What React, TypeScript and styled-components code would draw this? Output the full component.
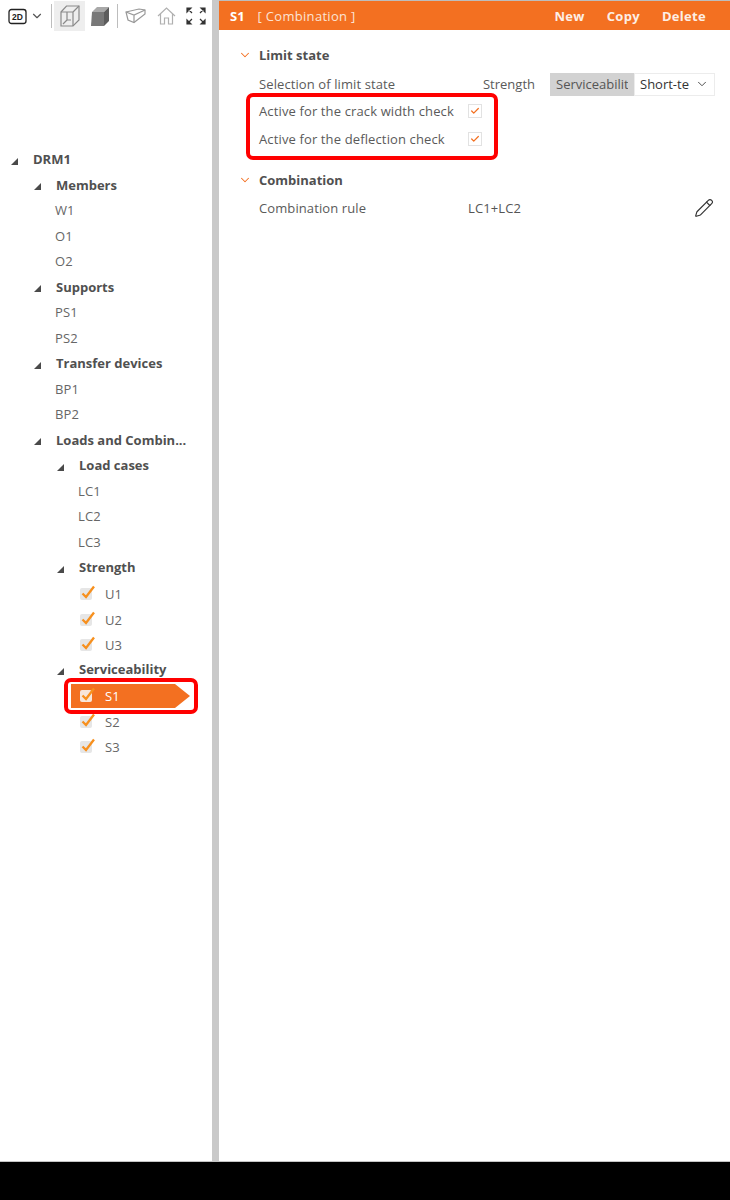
import styled, { createGlobalStyle } from 'styled-components'
import { Check, ChevronDown, Pencil } from 'lucide-react'

const ORANGE = '#f37021'

const Global = createGlobalStyle`
html, body { margin: 0; padding: 0; background: #fff; }
body { font-family: "Open Sans", "Noto Sans", "Liberation Sans", sans-serif; font-size: 13px; color: #555; }
`

type TreeNode = {
    label: string;
    level: number;
    kind: 'root' | 'group' | 'leaf' | 'check';
    selected?: boolean;
}

const nodes: TreeNode[] = [
    { label: 'DRM1', level: 0, kind: 'root' },
    { label: 'Members', level: 1, kind: 'group' },
    { label: 'W1', level: 1, kind: 'leaf' },
    { label: 'O1', level: 1, kind: 'leaf' },
    { label: 'O2', level: 1, kind: 'leaf' },
    { label: 'Supports', level: 1, kind: 'group' },
    { label: 'PS1', level: 1, kind: 'leaf' },
    { label: 'PS2', level: 1, kind: 'leaf' },
    { label: 'Transfer devices', level: 1, kind: 'group' },
    { label: 'BP1', level: 1, kind: 'leaf' },
    { label: 'BP2', level: 1, kind: 'leaf' },
    { label: 'Loads and Combin...', level: 1, kind: 'group' },
    { label: 'Load cases', level: 2, kind: 'group' },
    { label: 'LC1', level: 2, kind: 'leaf' },
    { label: 'LC2', level: 2, kind: 'leaf' },
    { label: 'LC3', level: 2, kind: 'leaf' },
    { label: 'Strength', level: 2, kind: 'group' },
    { label: 'U1', level: 2, kind: 'check' },
    { label: 'U2', level: 2, kind: 'check' },
    { label: 'U3', level: 2, kind: 'check' },
    { label: 'Serviceability', level: 2, kind: 'group' },
    { label: 'S1', level: 2, kind: 'check', selected: true },
    { label: 'S2', level: 2, kind: 'check' },
    { label: 'S3', level: 2, kind: 'check' },
]

const App = () => {
    return (
        <>
            <Global />
            <Page>
                <Main>
                    <Sidebar>
                        <Toolbar>
                            <ToolIcon $width={20}>
                                <svg width="19" height="17" viewBox="0 0 19 17" fill="none">
                                    <rect x="1" y="1.5" width="17" height="14" rx="2.5" stroke="#222" strokeWidth="1.3" />
                                    <text x="9.5" y="11.5" textAnchor="middle" fontSize="8.5" fontWeight="700" fontFamily="Liberation Sans, sans-serif" fill="#222">2D</text>
                                </svg>
                            </ToolIcon>
                            <ToolIcon $width={20}>
                                <ChevronDown size={14} color="#555" strokeWidth={2} />
                            </ToolIcon>
                            <Separator $gap={4} />
                            <ActiveTool>
                                <svg width="20" height="22" viewBox="0 0 20 22" fill="none" stroke="#8a8a8a" strokeWidth="1.2">
                                    <path d="M1 7 L6.5 1 H19 V15 L13 21 H1 Z" />
                                    <path d="M1 7 H13 V21 M13 7 L19 1" />
                                    <path d="M7 7 V15 M7 15 L3 19 M7 15 H11" />
                                </svg>
                            </ActiveTool>
                            <ToolIcon $width={30}>
                                <svg width="20" height="21" viewBox="0 0 20 21">
                                    <path d="M2 6 L7 1 H19 L14 6 Z" fill="#a8a8a8" />
                                    <path d="M14 6 L19 1 V15 L14 20 Z" fill="#5c5c5c" />
                                    <path d="M2 6 H14 V20 H1 Z" fill="#787878" />
                                </svg>
                            </ToolIcon>
                            <Separator $gap={2} />
                            <ToolIcon $width={34}>
                                <svg width="21" height="16" viewBox="0 0 21 16" fill="none" stroke="#999" strokeWidth="1.2">
                                    <path d="M1 4 L14 1 L20 2 V6 L9 14.5 L3 12 Z" />
                                    <path d="M1 4 L9 7 L20 2 M9 7 V14.5" />
                                </svg>
                            </ToolIcon>
                            <ToolIcon $width={28}>
                                <svg width="19" height="18" viewBox="0 0 19 18" fill="none" stroke="#b0b0b0" strokeWidth="1.2">
                                    <path d="M1 9 L9.5 1 L18 9" />
                                    <path d="M3.5 7 V17 H7.5 V11 H11.5 V17 H15.5 V7" />
                                </svg>
                            </ToolIcon>
                            <ToolIcon $width={32}>
                                <svg width="20" height="18" viewBox="0 0 20 18" fill="#333" stroke="#333" strokeWidth="1.2">
                                    <path d="M1 1 H5 L1 5 Z M2 2 L6 6" />
                                    <path d="M19 1 H15 L19 5 Z M18 2 L14 6" />
                                    <path d="M1 17 H5 L1 13 Z M2 16 L6 12" />
                                    <path d="M19 17 H15 L19 13 Z M18 16 L14 12" />
                                </svg>
                            </ToolIcon>
                        </Toolbar>
                        <Tree>
                            {nodes.map((node) => (
                                <Row key={node.label} $level={node.level} $kind={node.kind}>
                                    {node.kind === 'check' ? (
                                        <CheckRow $selected={node.selected}>
                                            <TreeCheck $selected={node.selected}>
                                                <svg width="15" height="15" viewBox="0 0 15 15" fill="none">
                                                    <path d="M1.5 8.5 L5 12 L13 1.5" stroke="#f7901e" strokeWidth="2.3" />
                                                </svg>
                                            </TreeCheck>
                                            <span>{node.label}</span>
                                            {node.selected && <Highlight $inset="-6px -23px -6px -7px" />}
                                        </CheckRow>
                                    ) : (
                                        <>
                                            {node.kind !== 'leaf' && <Expander />}
                                            <span>{node.label}</span>
                                        </>
                                    )}
                                </Row>
                            ))}
                        </Tree>
                    </Sidebar>
                    <Divider />
                    <Content>
                        <Header>
                            <strong>S1</strong>
                            <HeaderTitle>[ Combination ]</HeaderTitle>
                            <HeaderActions>
                                <HeaderAction>New</HeaderAction>
                                <HeaderAction>Copy</HeaderAction>
                                <HeaderAction>Delete</HeaderAction>
                            </HeaderActions>
                        </Header>
                        <Body>
                            <SectionTitle>
                                <ChevronDown size={14} color={ORANGE} strokeWidth={1.8} />
                                Limit state
                            </SectionTitle>
                            <SelectRow>
                                <Label>Selection of limit state</Label>
                                <Toggle>Strength</Toggle>
                                <ToggleActive><span>Serviceability</span></ToggleActive>
                                <Select>
                                    <span>Short-te</span>
                                    <ChevronDown size={14} color="#444" strokeWidth={1.6} />
                                </Select>
                            </SelectRow>
                            <ChecksGroup>
                                <CheckLine>
                                    <CheckLabel>Active for the crack width check</CheckLabel>
                                    <FormCheck><Check size={10} color={ORANGE} strokeWidth={3} /></FormCheck>
                                </CheckLine>
                                <CheckLine>
                                    <CheckLabel>Active for the deflection check</CheckLabel>
                                    <FormCheck><Check size={10} color={ORANGE} strokeWidth={3} /></FormCheck>
                                </CheckLine>
                                <Highlight $inset="0" />
                            </ChecksGroup>
                            <SectionTitle $gap={10}>
                                <ChevronDown size={14} color={ORANGE} strokeWidth={1.8} />
                                Combination
                            </SectionTitle>
                            <RuleRow>
                                <Label>Combination rule</Label>
                                <RuleValue>LC1+LC2</RuleValue>
                                <Pencil size={20} color="#333" strokeWidth={1.4} />
                            </RuleRow>
                        </Body>
                    </Content>
                </Main>
                <Footer />
            </Page>
        </>
    )
}

export default App;

const Page = styled.div`
height: 1200px;
width: 730px;
display: flex;
flex-direction: column;
overflow: hidden;
`

const Main = styled.div`
flex: 1;
display: flex;
min-height: 0;
border-bottom: 1px solid #c4c4c4;
`

const Footer = styled.div`
height: 38px;
background: #000;
`

const Sidebar = styled.div`
width: 212px;
flex-shrink: 0;
`

const Divider = styled.div`
width: 7px;
flex-shrink: 0;
background: #c9c9c9;
`

const Toolbar = styled.div`
height: 30px;
padding: 1px 0 0 7px;
display: flex;
align-items: center;
`

const ToolIcon = styled.div<{ $width: number }>`
width: ${(p) => p.$width}px;
height: 30px;
display: flex;
align-items: center;
justify-content: center;
flex-shrink: 0;
`

const ActiveTool = styled.div`
width: 31px;
height: 30px;
margin-left: 2px;
background: #eeeeee;
display: flex;
align-items: center;
justify-content: center;
`

const Separator = styled.div<{ $gap: number }>`
width: 1px;
height: 24px;
margin-left: ${(p) => p.$gap}px;
background: #bdbdbd;
`

const Tree = styled.div`
margin-top: 115.5px;
`

const Row = styled.div<{ $level: number; $kind: TreeNode['kind'] }>`
height: 25.5px;
display: flex;
align-items: center;
position: relative;
font-size: 13px;
font-weight: ${(p) => (p.$kind === 'root' || p.$kind === 'group' ? 700 : 400)};
color: ${(p) => (p.$kind === 'root' || p.$kind === 'group' ? '#505050' : '#666')};
letter-spacing: ${(p) => (p.$kind === 'root' || p.$kind === 'group' ? '0' : '0.1px')};
padding-left: ${(p) => {
    if (p.$kind === 'check') return 0
    const base = 11 + p.$level * 23
    return p.$kind === 'leaf' ? base + 21 : base
}}px;
`

const Expander = styled.i`
width: 0;
height: 0;
margin-right: 15px;
border-style: solid;
border-width: 0 0 7px 7px;
border-color: transparent transparent #4a4a4a transparent;
flex-shrink: 0;
margin-top: 4px;
`

const CheckRow = styled.div<{ $selected?: boolean }>`
position: relative;
height: 24px;
margin: 3px 0 0 71px;
padding-left: 9px;
display: flex;
align-items: center;
box-sizing: border-box;
background: ${(p) => (p.$selected ? ORANGE : 'transparent')};
color: ${(p) => (p.$selected ? '#fff' : '#666')};

${(p) => p.$selected && `
    width: 104px;
    &::after {
        content: "";
        position: absolute;
        left: 100%;
        top: 0;
        border-style: solid;
        border-width: 12px 0 12px 15px;
        border-color: transparent transparent transparent ${ORANGE};
    }
`}
`

const TreeCheck = styled.div<{ $selected?: boolean }>`
width: 12px;
height: 12px;
margin-right: 13px;
background: ${(p) => (p.$selected ? '#f8e6da' : '#e6e6e6')};
border-radius: 2px;
position: relative;
flex-shrink: 0;

svg {
    position: absolute;
    left: 1px;
    top: -3px;
}
`

const Highlight = styled.div<{ $inset: string }>`
position: absolute;
inset: ${(p) => p.$inset};
border: 4px solid #ff0000;
border-radius: 7px;
box-sizing: border-box;
pointer-events: none;
z-index: 2;
`

const Content = styled.div`
flex: 1;
min-width: 0;
border-top: 1px solid #bdbdbd;
`

const Header = styled.div`
height: 29px;
background: ${ORANGE};
color: #fff;
padding: 0 11px;
display: flex;
align-items: center;
font-size: 13px;

strong {
    font-weight: 700;
}
`

const HeaderTitle = styled.span`
margin-left: 13px;
letter-spacing: 0.3px;
color: #fbe3d5;
`

const HeaderActions = styled.div`
margin-left: auto;
padding-right: 13px;
display: flex;
gap: 22px;
`

const HeaderAction = styled.span`
font-weight: 700;
letter-spacing: 0.3px;
color: #fdeee5;
`

const Body = styled.div`
padding: 15px 15px 0 40px;
`

const SectionTitle = styled.div<{ $gap?: number }>`
position: relative;
height: 20px;
margin-top: ${(p) => p.$gap ?? 0}px;
display: flex;
align-items: center;
font-weight: 700;
color: #505050;

svg {
    position: absolute;
    left: -21px;
}
`

const SelectRow = styled.div`
height: 24px;
margin-top: 7px;
display: flex;
align-items: center;
`

const Label = styled.span`
color: #5a5a5a;
letter-spacing: 0.1px;
`

const Toggle = styled.span`
margin-left: auto;
margin-right: 15px;
color: #5a5a5a;
`

const ToggleActive = styled.div`
width: 84px;
height: 23px;
padding: 0 6px;
box-sizing: border-box;
background: #d2d2d2;
display: flex;
align-items: center;
overflow: hidden;
white-space: nowrap;
color: #555;

span {
    overflow: hidden;
}
`

const Select = styled.div`
width: 81px;
height: 23px;
padding: 0 5px;
box-sizing: border-box;
border: 1px solid #ececec;
display: flex;
align-items: center;
justify-content: space-between;
color: #333;
white-space: nowrap;
`

const ChecksGroup = styled.div`
position: relative;
width: 252px;
height: 67px;
margin: -3px 0 0 -13px;
padding: 4px 0 0 13px;
box-sizing: border-box;
`

const CheckLine = styled.div`
height: 28px;
display: flex;
align-items: center;
`

const CheckLabel = styled.span`
width: 209px;
white-space: nowrap;
letter-spacing: 0.13px;
color: #5a5a5a;
`

const FormCheck = styled.div`
width: 14px;
height: 14px;
border: 1px solid #e2e2e2;
box-sizing: border-box;
display: flex;
align-items: center;
justify-content: center;
`

const RuleRow = styled.div`
height: 24px;
margin-top: 6px;
padding-right: 1px;
display: flex;
align-items: center;
justify-content: space-between;
`

const RuleValue = styled.span`
margin-left: 102px;
margin-right: auto;
letter-spacing: 0.1px;
`
